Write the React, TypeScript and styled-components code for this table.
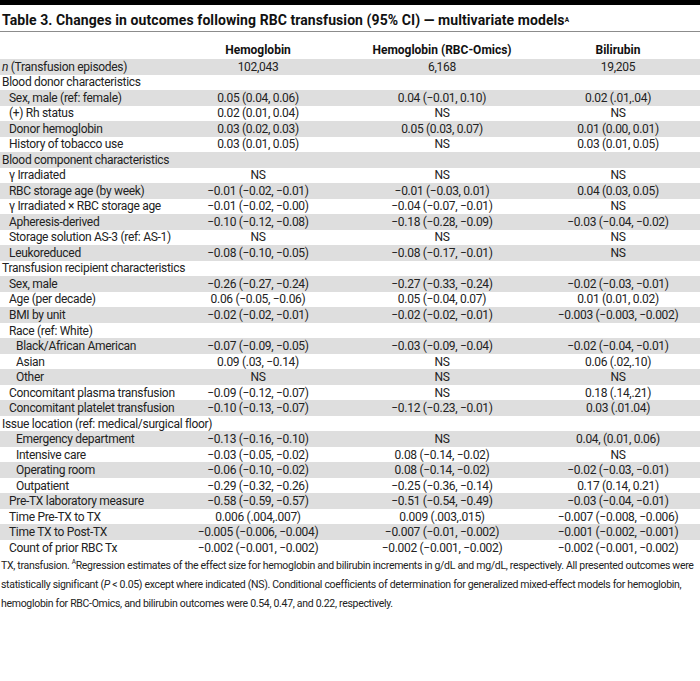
import React from "react";
import styled, { createGlobalStyle } from "styled-components";

const Global = createGlobalStyle`
  html, body { margin: 0; padding: 0; background: #fff; }
  body { font-family: Roboto, "Open Sans", sans-serif; color: #222; }
`;

const COLS = "168px 180px 188px 164px";

const Page = styled.div`
  width: 700px;
  display: flex;
  flex-direction: column;
`;

const TopBar = styled.div`
  height: 5px;
  background: #000;
`;

const Title = styled.div`
  height: 27px;
  box-sizing: border-box;
  padding: 4px 0 0 2px;
  display: flex;
  align-items: center;
  border-bottom: 1px solid #8c8c8c;
  font-size: 14px;
  font-weight: 700;
  letter-spacing: 0.08px;
  color: #111;
`;

const Sup = styled.sup`
  font-size: 6.5px;
  vertical-align: 5px;
  line-height: 0;
`;

const HeaderRow = styled.div`
  display: grid;
  grid-template-columns: ${COLS};
  height: 27px;
  align-items: end;
  padding-bottom: 2px;
  box-sizing: border-box;
  font-size: 12px;
  font-weight: 700;
  color: #111;
`;

const HeadCell = styled.div`
  text-align: center;
`;

const Row = styled.div<{ $shaded: boolean }>`
  display: grid;
  grid-template-columns: ${COLS};
  height: 15.52px;
  align-items: center;
  background: ${(p) => (p.$shaded ? "#dedede" : "#fff")};
  font-size: 12px;
  letter-spacing: -0.3px;
  color: #222;
`;

const Label = styled.div<{ $level: number }>`
  padding-left: ${(p) => 2 + p.$level * 7}px;
  white-space: nowrap;
`;

const Value = styled.div`
  text-align: center;
  white-space: nowrap;
`;

const Footnote = styled.p`
  margin: 0;
  padding-left: 1px;
  font-size: 10.5px;
  line-height: 19px;
  letter-spacing: -0.3px;
  color: #222;
`;

type RowData = { label: React.ReactNode; level: number; values?: [string, string, string] };

const rows: RowData[] = [
  { label: <><i>n</i> (Transfusion episodes)</>, level: 0, values: ["102,043", "6,168", "19,205"] },
  { label: "Blood donor characteristics", level: 0 },
  { label: "Sex, male (ref: female)", level: 1, values: ["0.05 (0.04, 0.06)", "0.04 (−0.01, 0.10)", "0.02 (.01,.04)"] },
  { label: "(+) Rh status", level: 1, values: ["0.02 (0.01, 0.04)", "NS", "NS"] },
  { label: "Donor hemoglobin", level: 1, values: ["0.03 (0.02, 0.03)", "0.05 (0.03, 0.07)", "0.01 (0.00, 0.01)"] },
  { label: "History of tobacco use", level: 1, values: ["0.03 (0.01, 0.05)", "NS", "0.03 (0.01, 0.05)"] },
  { label: "Blood component characteristics", level: 0 },
  { label: "γ Irradiated", level: 1, values: ["NS", "NS", "NS"] },
  { label: "RBC storage age (by week)", level: 1, values: ["−0.01 (−0.02, −0.01)", "−0.01 (−0.03, 0.01)", "0.04 (0.03, 0.05)"] },
  { label: "γ Irradiated × RBC storage age", level: 1, values: ["−0.01 (−0.02, −0.00)", "−0.04 (−0.07, −0.01)", "NS"] },
  { label: "Apheresis-derived", level: 1, values: ["−0.10 (−0.12, −0.08)", "−0.18 (−0.28, −0.09)", "−0.03 (−0.04, −0.02)"] },
  { label: "Storage solution AS-3 (ref: AS-1)", level: 1, values: ["NS", "NS", "NS"] },
  { label: "Leukoreduced", level: 1, values: ["−0.08 (−0.10, −0.05)", "−0.08 (−0.17, −0.01)", "NS"] },
  { label: "Transfusion recipient characteristics", level: 0 },
  { label: "Sex, male", level: 1, values: ["−0.26 (−0.27, −0.24)", "−0.27 (−0.33, −0.24)", "−0.02 (−0.03, −0.01)"] },
  { label: "Age (per decade)", level: 1, values: ["0.06 (−0.05, −0.06)", "0.05 (−0.04, 0.07)", "0.01 (0.01, 0.02)"] },
  { label: "BMI by unit", level: 1, values: ["−0.02 (−0.02, −0.01)", "−0.02 (−0.02, −0.01)", "−0.003 (−0.003, −0.002)"] },
  { label: "Race (ref: White)", level: 1 },
  { label: "Black/African American", level: 2, values: ["−0.07 (−0.09, −0.05)", "−0.03 (−0.09, −0.04)", "−0.02 (−0.04, −0.01)"] },
  { label: "Asian", level: 2, values: ["0.09 (.03, −0.14)", "NS", "0.06 (.02,.10)"] },
  { label: "Other", level: 2, values: ["NS", "NS", "NS"] },
  { label: "Concomitant plasma transfusion", level: 1, values: ["−0.09 (−0.12, −0.07)", "NS", "0.18 (.14,.21)"] },
  { label: "Concomitant platelet transfusion", level: 1, values: ["−0.10 (−0.13, −0.07)", "−0.12 (−0.23, −0.01)", "0.03 (.01.04)"] },
  { label: "Issue location (ref: medical/surgical floor)", level: 0 },
  { label: "Emergency department", level: 2, values: ["−0.13 (−0.16, −0.10)", "NS", "0.04, (0.01, 0.06)"] },
  { label: "Intensive care", level: 2, values: ["−0.03 (−0.05, −0.02)", "0.08 (−0.14, −0.02)", "NS"] },
  { label: "Operating room", level: 2, values: ["−0.06 (−0.10, −0.02)", "0.08 (−0.14, −0.02)", "−0.02 (−0.03, −0.01)"] },
  { label: "Outpatient", level: 2, values: ["−0.29 (−0.32, −0.26)", "−0.25 (−0.36, −0.14)", "0.17 (0.14, 0.21)"] },
  { label: "Pre-TX laboratory measure", level: 1, values: ["−0.58 (−0.59, −0.57)", "−0.51 (−0.54, −0.49)", "−0.03 (−0.04, −0.01)"] },
  { label: "Time Pre-TX to TX", level: 1, values: ["0.006 (.004,.007)", "0.009 (.003,.015)", "−0.007 (−0.008, −0.006)"] },
  { label: "Time TX to Post-TX", level: 1, values: ["−0.005 (−0.006, −0.004)", "−0.007 (−0.01, −0.002)", "−0.001 (−0.002, −0.001)"] },
  { label: "Count of prior RBC Tx", level: 1, values: ["−0.002 (−0.001, −0.002)", "−0.002 (−0.001, −0.002)", "−0.002 (−0.001, −0.002)"] },
];

export default function App() {
  return (
    <Page>
      <Global />
      <TopBar />
      <Title>
        Table 3. Changes in outcomes following RBC transfusion (95% CI) — multivariate models<Sup>A</Sup>
      </Title>
      <HeaderRow>
        <div />
        <HeadCell>Hemoglobin</HeadCell>
        <HeadCell>Hemoglobin (RBC-Omics)</HeadCell>
        <HeadCell>Bilirubin</HeadCell>
      </HeaderRow>
      {rows.map((r, i) => (
        <Row key={i} $shaded={i % 2 === 0}>
          <Label $level={r.level}>{r.label}</Label>
          <Value>{r.values?.[0] ?? ""}</Value>
          <Value>{r.values?.[1] ?? ""}</Value>
          <Value>{r.values?.[2] ?? ""}</Value>
        </Row>
      ))}
      <Footnote>
        TX, transfusion. <Sup>A</Sup>Regression estimates of the effect size for hemoglobin and bilirubin increments in g/dL and mg/dL,
        respectively. All presented outcomes were statistically significant (<i>P</i> &lt; 0.05) except where indicated (NS).
        Conditional coefficients of determination for generalized mixed-effect models for hemoglobin, hemoglobin for RBC-Omics,
        and bilirubin outcomes were 0.54, 0.47, and 0.22, respectively.
      </Footnote>
    </Page>
  );
}
